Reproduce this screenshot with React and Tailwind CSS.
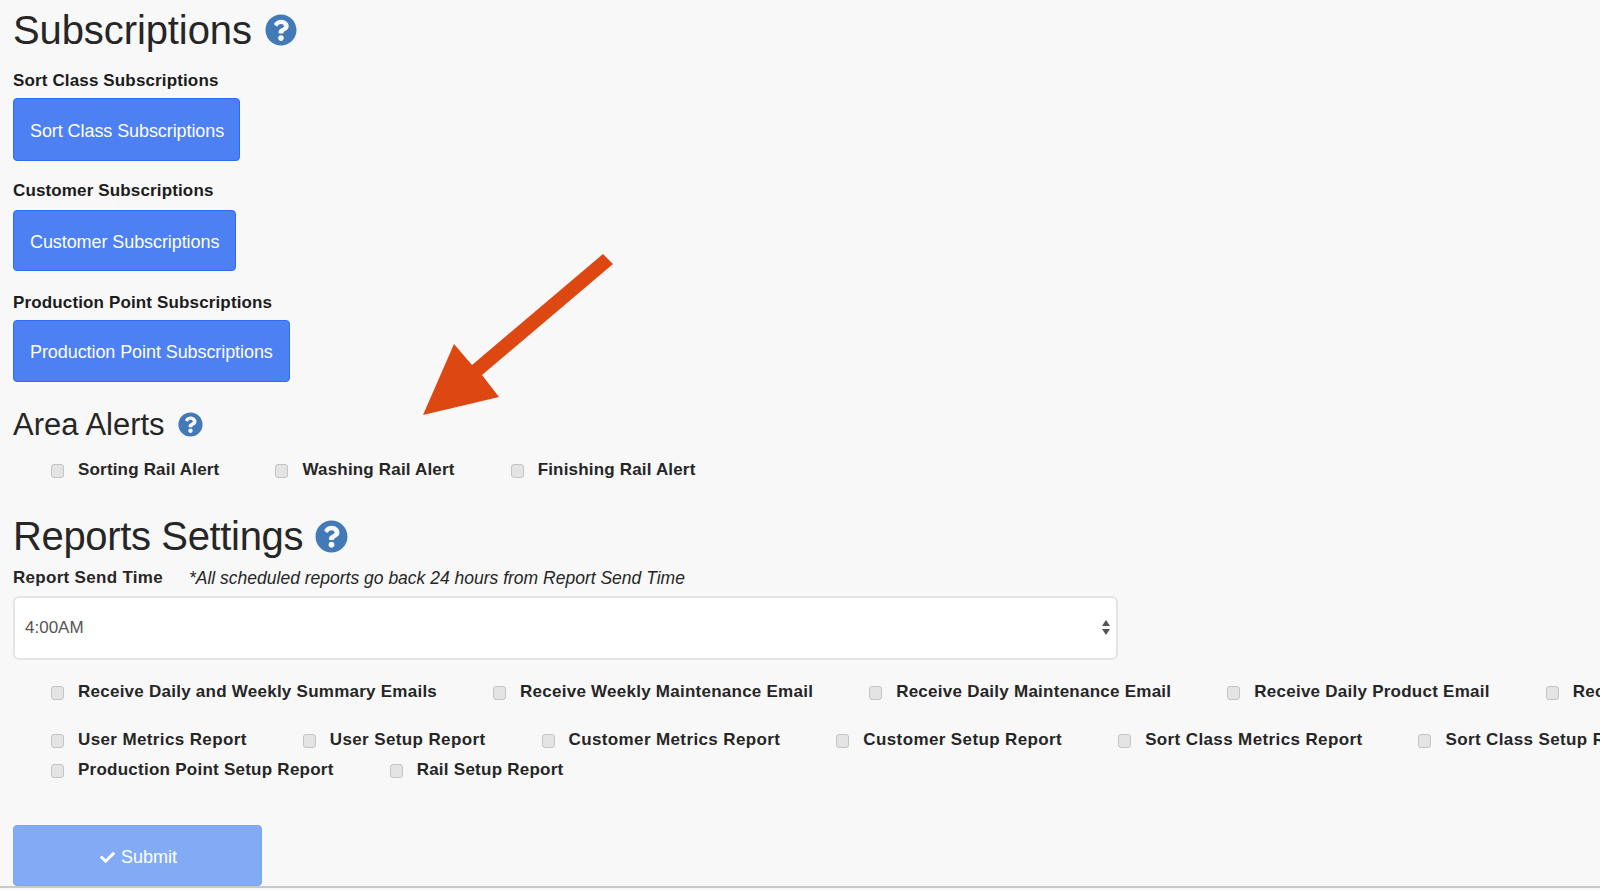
import { FaQuestionCircle, FaCheck } from 'react-icons/fa';

const alerts = ['Sorting Rail Alert', 'Washing Rail Alert', 'Finishing Rail Alert'];

const emails = [
  'Receive Daily and Weekly Summary Emails',
  'Receive Weekly Maintenance Email',
  'Receive Daily Maintenance Email',
  'Receive Daily Product Email',
  'Receive Daily Rail Email',
];

const reportsA = [
  'User Metrics Report',
  'User Setup Report',
  'Customer Metrics Report',
  'Customer Setup Report',
  'Sort Class Metrics Report',
  'Sort Class Setup Report',
];

const reportsB = ['Production Point Setup Report', 'Rail Setup Report'];

function CheckRow({ items, className }) {
  return (
    <div className={`flex gap-[56px] pl-[38px] text-[17px] leading-[24px] font-bold text-[#262626] ${className}`}>
      {items.map((label) => (
        <label key={label} className="flex items-center shrink-0 whitespace-nowrap">
          <input
            type="checkbox"
            className="appearance-none translate-y-[1px] w-[13px] h-[14px] mr-[14px] rounded-[3px] bg-[#e4e4e4] border border-[#c4c4c4]"
          />
          {label}
        </label>
      ))}
    </div>
  );
}

function SubBlock({ title, wClass, hClass, mClass, gapClass }) {
  return (
    <div className={mClass}>
      <div className="text-[17px] leading-[24px] font-bold tracking-[0.14px] text-[#1c1c1c]">{title}</div>
      <button className={`block rounded-[4px] border border-[#2a6df4] bg-[#4d80f3] text-left pl-[16px] pt-[3px] text-[18px] tracking-[-0.08px] text-white ${gapClass} ${wClass} ${hClass}`}>
        {title}
      </button>
    </div>
  );
}

export default function App() {
  return (
    <div className="w-[1600px] h-[890px] overflow-hidden bg-[#f8f8f8] font-['Liberation_Sans',Arial,sans-serif]">
      <div className="relative h-[888px] border-b-2 border-[#c9c9c9] pl-[13px]">
        {/* arrow sits on top of the form */}
        <svg className="absolute left-[415px] top-[250px]" width="200" height="170" viewBox="415 250 200 170">
          <polygon points="423,415 454,344 472,365 603,254 613,264 482,375 499,397" fill="#dc4712" />
        </svg>

        <div className="flex items-center h-[60px] text-[#262626]">
          <h1 className="text-[40px] leading-[60px] tracking-[-0.1px]">Subscriptions</h1>
          <FaQuestionCircle className="ml-[13px] text-[#4279b7]" size={32} />
        </div>

        <SubBlock title="Sort Class Subscriptions" wClass="w-[227px]" hClass="h-[63px]" mClass="mt-[9px]" gapClass="mt-[5px]" />
        <SubBlock title="Customer Subscriptions" wClass="w-[223px]" hClass="h-[61px]" mClass="mt-[18px]" gapClass="mt-[7px]" />
        <SubBlock title="Production Point Subscriptions" wClass="w-[277px]" hClass="h-[62px]" mClass="mt-[20px]" gapClass="mt-[5px]" />

        <div className="flex items-center h-[40px] mt-[22px] text-[#262626]">
          <h2 className="text-[31px] leading-[40px] translate-y-[1px]">Area Alerts</h2>
          <FaQuestionCircle className="ml-[13px] text-[#4279b7]" size={25} />
        </div>

        <CheckRow items={alerts} className="mt-[14px] tracking-[0.18px]" />

        <div className="flex items-center h-[40px] mt-[34px] text-[#262626]">
          <h2 className="text-[40px] leading-[40px] tracking-[-0.35px]">Reports Settings</h2>
          <FaQuestionCircle className="ml-[12px] text-[#4279b7]" size={33} />
        </div>

        <div className="flex items-center h-[24px] mt-[10px] text-[17px]">
          <span className="font-bold tracking-[0.3px] text-[#262626]">Report Send Time</span>
          <em className="ml-[26px] text-[17.5px] text-[#262626]">*All scheduled reports go back 24 hours from Report Send Time</em>
        </div>

        <div className="relative w-[1105px] h-[64px] mt-[6px]">
          <select className="appearance-none w-full h-full rounded-[6px] border-2 border-[#e4e4e4] bg-white pl-[10px] text-[17px] text-[#555555]">
            <option>4:00AM</option>
          </select>
          <svg className="absolute right-[8px] top-[24px]" width="8" height="15" viewBox="0 0 8 15">
            <polygon points="4,0 8,6 0,6" fill="#555555" />
            <polygon points="0,9 8,9 4,15" fill="#555555" />
          </svg>
        </div>

        <CheckRow items={emails} className="mt-[20px] tracking-[0.25px]" />
        <CheckRow items={reportsA} className="mt-[24px] tracking-[0.38px]" />
        <CheckRow items={reportsB} className="mt-[6px] tracking-[0.25px]" />

        <button className="mt-[43px] pt-[3px] pl-[2px] flex items-center justify-center w-[249px] h-[61px] rounded-[4px] bg-[#83abf5] border border-[#7ba5f2] text-[18px] text-white">
          <FaCheck className="mr-[6px]" size={15} />
          Submit
        </button>
      </div>
    </div>
  );
}
